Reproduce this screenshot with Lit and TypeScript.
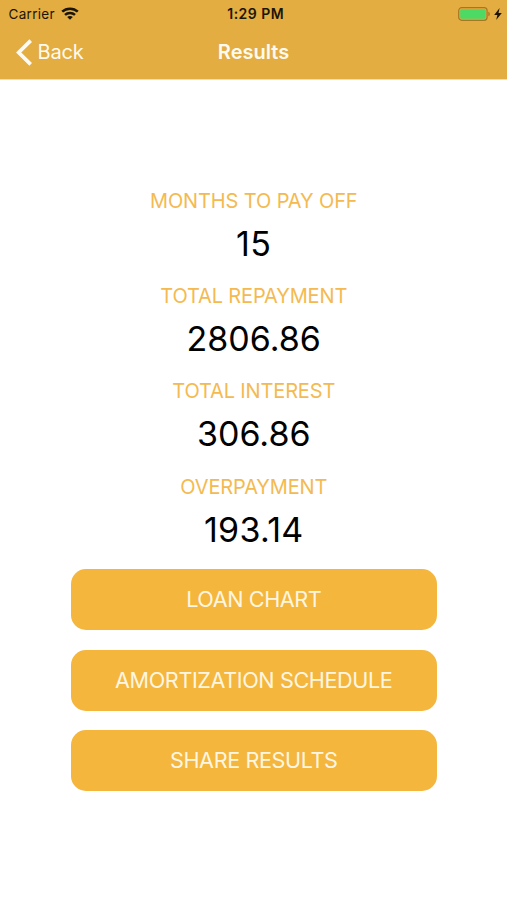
import { LitElement, html, css } from "lit";
import { customElement } from "lit/decorators.js";
import { styleMap } from "lit/directives/style-map.js";

interface Entry {
  label: string;
  value: string;
  labelTracking: number;
  valueTracking: number;
}

const ENTRIES: Entry[] = [
  { label: "MONTHS TO PAY OFF", value: "15", labelTracking: -0.12, valueTracking: 0.5 },
  { label: "TOTAL REPAYMENT", value: "2806.86", labelTracking: -0.15, valueTracking: 0 },
  { label: "TOTAL INTEREST", value: "306.86", labelTracking: -0.15, valueTracking: 0 },
  { label: "OVERPAYMENT", value: "193.14", labelTracking: -0.15, valueTracking: 0.3 },
];

const ACTIONS = [
  { text: "LOAN CHART", tracking: -0.4 },
  { text: "AMORTIZATION SCHEDULE", tracking: -0.38 },
  { text: "SHARE RESULTS", tracking: -0.38 },
];

const tracking = (px: number) => styleMap({ letterSpacing: `${px}px` });

@customElement("app-root")
export class AppRoot extends LitElement {
  static styles = css`
    :host {
      display: flex;
      flex-direction: column;
      height: 900px;
      background: #fff;
      color: #000;
      font-family: Inter, "Liberation Sans", sans-serif;
      overflow: hidden;
    }
    .header {
      height: 79px;
      flex: none;
      background: #e3ad42;
      border-bottom: 1px solid #f3dcae;
      box-sizing: content-box;
    }
    .status,
    .nav {
      display: grid;
      grid-template-columns: 1fr auto 1fr;
      align-items: center;
      box-sizing: border-box;
    }
    .status {
      height: 27px;
      padding: 0 5px 0 8.5px;
      font-size: 13.5px;
      color: #1c1505;
    }
    .carrier,
    .power,
    .back {
      display: flex;
      align-items: center;
    }
    .carrier {
      gap: 6.5px;
      letter-spacing: 0.3px;
    }
    .power { justify-content: flex-end; gap: 3.5px; }
    .time {
      font-weight: 600;
      font-size: 14px;
      letter-spacing: 0.5px;
      padding-left: 1px;
    }
    .nav {
      height: 50px;
      padding: 0 16px;
      color: #fffaf0;
      font-size: 20px;
    }
    .back { gap: 4.5px; }
    .back span { letter-spacing: -0.2px; }
    .title { font-weight: 600; }
    svg { display: block; }
    .results {
      display: flex;
      flex-direction: column;
      align-items: center;
      padding: 104.7px 0 0 0.5px;
    }
    .entry {
      height: 95.3px;
      text-align: center;
      white-space: nowrap;
    }
    .label {
      height: 32px;
      line-height: 32px;
      font-size: 20px;
      color: #f4ba51;
    }
    .value {
      height: 54px;
      line-height: 54px;
      font-size: 34px;
    }
    .actions {
      display: flex;
      flex-direction: column;
      gap: 19.5px;
      padding: 3.6px 70px 0 70.5px;
    }
    .action {
      height: 61px;
      border: 0;
      border-radius: 15px;
      padding: 0 0 1px;
      background: #f4b63c;
      color: #fff6e2;
      font: 400 21.6px Inter, "Liberation Sans", sans-serif;
      white-space: nowrap;
    }
  `;

  render() {
    return html`
      <header class="header">
        <div class="status">
          <div class="carrier">
            <span>Carrier</span>
            <svg width="18" height="13" viewBox="0 0 18 13" fill="none" stroke="#1c1505" stroke-width="2.5">
              <path d="M1.2 4.7C5.5 .6 12.5 .6 16.8 4.7" />
              <path d="M4 7.9C6.8 5.3 11.2 5.3 14 7.9" />
              <path d="M9 12.7L6.2 10C7.8 8.6 10.2 8.6 11.8 10Z" fill="#1c1505" stroke="none" />
            </svg>
          </div>
          <span class="time">1:29 PM</span>
          <div class="power">
            <svg width="33" height="14" viewBox="0 0 33 14">
              <rect x=".7" y=".7" width="28.4" height="12.6" rx="3" fill="none" stroke="#a67722" stroke-width="1.2" />
              <rect x="2.2" y="2.2" width="25.4" height="9.6" rx="1.4" fill="#4cd964" />
              <path d="M30.3 4.7C32.3 5.2 32.3 8.8 30.3 9.3Z" fill="#a67722" />
            </svg>
            <svg width="8" height="12" viewBox="0 0 8 12">
              <path d="M5.6 0L.2 6.9H3.4L2.2 12L7.8 4.9H4.5Z" fill="#1c1505" />
            </svg>
          </div>
        </div>
        <div class="nav">
          <div class="back">
            <svg width="17" height="27" viewBox="0 0 17 27" fill="none" stroke="#fffaf0" stroke-width="3.7">
              <path d="M14.7 1.6L2.7 13.5L14.7 25.4" />
            </svg>
            <span>Back</span>
          </div>
          <span class="title">Results</span>
        </div>
      </header>
      <section class="results">
        ${ENTRIES.map(
          (e) => html`<div class="entry">
            <div class="label" style=${tracking(e.labelTracking)}>${e.label}</div>
            <div class="value" style=${tracking(e.valueTracking)}>${e.value}</div>
          </div>`
        )}
      </section>
      <nav class="actions">
        ${ACTIONS.map((a) => html`<button class="action" style=${tracking(a.tracking)}>${a.text}</button>`)}
      </nav>
    `;
  }
}
